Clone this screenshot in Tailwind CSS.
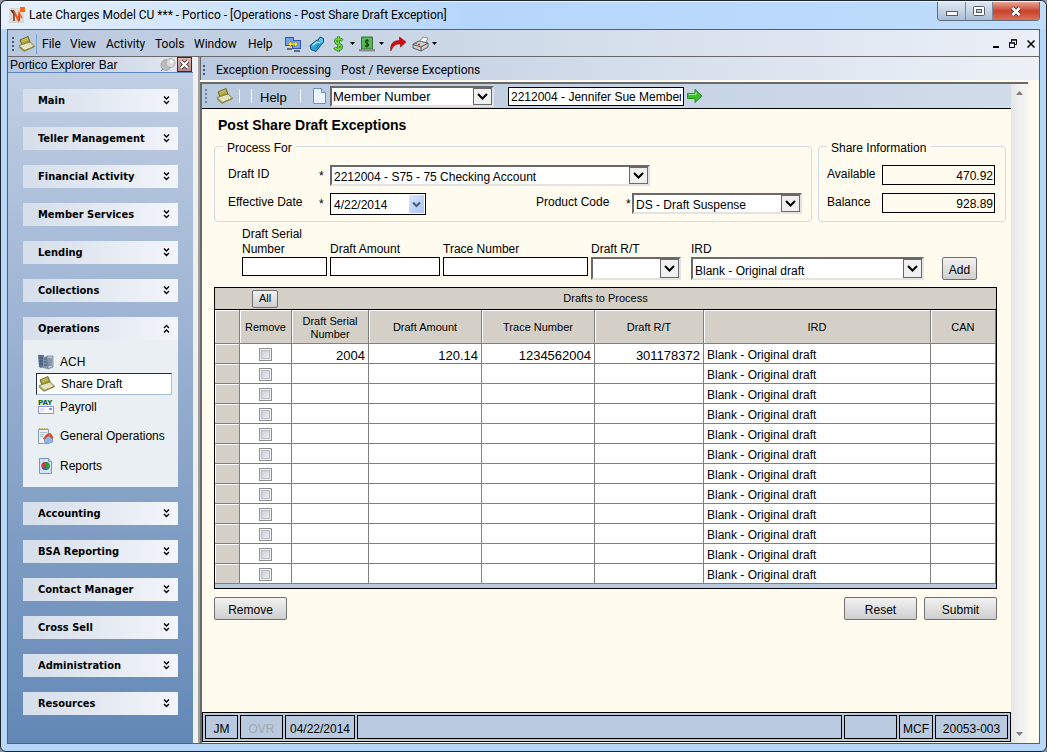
<!DOCTYPE html>
<html lang="en">
<head>
    <meta charset="UTF-8">
    <meta name="viewport" content="width=device-width, initial-scale=1.0">
    <title>Portico - Post Share Draft Exception</title>
    <script src="https://cdn.jsdelivr.net/npm/@tailwindcss/browser@4"></script>
</head>
<body class="bg-[#8d949c] font-['Liberation_Sans',Arial,sans-serif] text-xs text-black">

    <!-- Icons used more than once -->
    <svg class="hidden">
        <symbol id="down" viewBox="0 0 7 9"><path d="M1 .5l2.500 2.500L6 .5M1 5l2.500 2.500L6 5" fill="none" stroke="#000" stroke-width="1.400"/></symbol>
        <symbol id="up" viewBox="0 0 7 9"><path d="M1 4l2.500-2.500L6 4M1 8.500L3.500 6 6 8.500" fill="none" stroke="#000" stroke-width="1.400"/></symbol>
        <symbol id="arrow" viewBox="0 0 11 7"><path d="M1 1l4.500 4.500L10 1" fill="none" stroke="#000" stroke-width="2"/></symbol>
        <symbol id="share" viewBox="0 0 17 16">
            <path d="M2 4l8-3.500 2 5.500-8 3z" fill="#a9a43a" stroke="#6f6b1c"/>
            <path d="M3.500 4.500l6-2.500M4 6l6-2.500" stroke="#c9c566"/>
            <path d="M1 9.500l11-3.500 4.500 4L6 14.500z" fill="#d9d8a8" stroke="#77733a" stroke-width=".8"/>
            <path d="M4 10l7-2.500M5.500 11.500l7-2.500M7 13l7-2.500" stroke="#fff" stroke-dasharray="2 1"/>
            <path d="M1 10v1.500L6 15.800l10.500-4.500V10L6 14.500z" fill="#8a852c"/>
        </symbol>
        <symbol id="caret" viewBox="0 0 5 3"><path d="M0 0h5L2.500 3z"/></symbol>
        <symbol id="grip" viewBox="0 0 2 14"><path d="M0 0h2v2H0zM0 4h2v2H0zM0 8h2v2H0zM0 12h2v2H0z" fill="#44557f"/></symbol>
    </svg>

    <div class="flex h-screen min-h-[752px] flex-col rounded-md border border-[#20262e] bg-[#b7d7f9] px-[6px] pb-[7px]">

        <!-- Title bar -->
        <header class="-mx-[6px] flex h-7 shrink-0 items-start rounded-t-md border-t border-white/70 bg-linear-to-r from-[#e6f0fc] via-[#b5d6fb] via-45% to-[#bfdcfb] pl-2 font-['Roboto','Noto_Sans',sans-serif]">
            <svg class="mt-[5px] h-4 w-4" viewBox="0 0 16 16">
                <rect y="1" width="15" height="15" fill="#dcd8d4"/>
                <path d="M2 3l3 4v7M4 3l6 11V7" fill="none" stroke="#5a3a2a" stroke-width="1.500"/>
                <path d="M5 4l4 9 1-7 3 5" fill="none" stroke="#f0591e" stroke-width="1.600"/>
                <rect x="11" width="5" height="5" fill="#fb6a12"/>
            </svg>
            <h1 class="ml-1 flex-1 pt-[5px] leading-4 whitespace-nowrap">Late Charges Model CU *** - Portico - [Operations - Post Share Draft Exception]</h1>
            <div class="mr-[6px] flex h-[19px] overflow-hidden rounded-b border border-t-0 border-[#5d6d80]">
                <button aria-label="Minimize" class="flex w-[28px] items-center justify-center border-r border-[#7b8b9f] bg-linear-to-b from-[#dbe6f2] via-[#c6d4e4] to-[#a9bdd5]"><svg class="mt-1 h-[5px] w-3"><rect x=".5" y=".5" width="11" height="4" fill="#fff" stroke="#555b6b"/></svg></button>
                <button aria-label="Restore" class="flex w-[27px] items-center justify-center border-r border-[#7b8b9f] bg-linear-to-b from-[#dbe6f2] via-[#c6d4e4] to-[#a9bdd5]"><svg class="h-[10px] w-3"><rect x=".5" y=".5" width="11" height="9" rx="1" fill="#fff" stroke="#555b6b"/><rect x="3.500" y="3.500" width="5" height="3" fill="#b9cade" stroke="#555b6b"/></svg></button>
                <button aria-label="Close" class="flex w-[46px] items-center justify-center bg-linear-to-b from-[#e5a494] via-[#c8412b] to-[#d97155]"><svg class="h-[11px] w-3" viewBox="0 0 12 11"><path d="M2.500 2l7 7m0-7l-7 7" stroke="#5a3c46" stroke-width="4.500"/><path d="M2.500 2l7 7m0-7l-7 7" stroke="#fff" stroke-width="2.600"/></svg></button>
            </div>
        </header>

        <div class="flex min-h-0 flex-1 flex-col border border-[#52606f] bg-[#fffbef]">

            <!-- Menu bar -->
            <nav class="flex h-[27px] shrink-0 items-center border-b border-[#696969] bg-linear-to-r from-[#b8c8df] via-[#cbd7e6] via-40% to-[#ebeff7] pt-px pl-1 font-['Roboto','Noto_Sans',sans-serif]">
                <svg class="h-[14px] w-[2px]"><use href="#grip"/></svg>
                <svg class="ml-1 h-4 w-[17px]"><use href="#share"/></svg>
                <span class="ml-px h-5 w-px bg-[#7ba0d8]"></span>
                <a href="#" class="ml-[5px] w-7">File</a>
                <a href="#" class="w-9">View</a>
                <a href="#" class="w-[49px]">Activity</a>
                <a href="#" class="w-[39px]">Tools</a>
                <a href="#" class="w-[54px]">Window</a>
                <a href="#" class="w-[37px]">Help</a>
                <svg class="h-4 w-4" viewBox="0 0 16 16">
                    <path d="M0 1h9v9H0zM7 4h9v9H7z" fill="#3156b8"/><path d="M1 2h7v7H1zM8 5h7v7H8z" fill="#6fa0ec"/>
                    <path d="M2 12h5v2H2zM9 14h6v2H9z" fill="#6c6c78"/><path d="M3 8l3-3v2h4V5l3 3-3 3V9H6v2z" fill="#ffe81a" stroke="#8f7700" stroke-width=".5"/>
                </svg>
                <svg class="ml-2 h-4 w-4" viewBox="0 0 16 16">
                    <path d="M1 9.500L8 4l6 2.500-7 9-5-2z" fill="#2aa6d8" stroke="#0c4f7c"/><path d="M9 4l2-3 3.500 1.500V6L13 8" fill="#5cc4ea" stroke="#0c4f7c"/>
                    <path d="M3.500 9.500l4.500-3.500 3 1" fill="none" stroke="#b8eefc" stroke-width="1.300"/><path d="M7 12.500l3-4" stroke="#0c4f7c"/>
                </svg>
                <svg class="ml-2 h-4 w-[11px]" viewBox="0 0 11 16"><path d="M9.500 4.500C7 2 2 2.500 2.500 5.500S9 8 8.500 11 3 14 1.500 11.500M5.500.5v15" fill="none" stroke="#1b5c1b" stroke-width="3"/><path d="M9.500 4.500C7 2 2 2.500 2.500 5.500S9 8 8.500 11 3 14 1.500 11.500M5.500.5v15" fill="none" stroke="#6fd63a" stroke-width="1.800"/></svg>
                <svg class="ml-[6px] h-[3px] w-[5px]"><use href="#caret"/></svg>
                <svg class="ml-1 h-4 w-4" viewBox="0 0 16 16">
                    <path d="M2.500 1h11v12h-11z" fill="#58b957" stroke="#3e6d3e"/><path d="M0 13h16v2.500H0z" fill="#8c8c8c"/>
                    <path d="M10 5C8 4 6 4.500 6.300 6S9.700 7.500 9.700 9 7 10.500 6 9.500M8 3v8.500" fill="none" stroke="#123f12" stroke-width="1.100"/>
                </svg>
                <svg class="ml-1 h-[3px] w-[5px]"><use href="#caret"/></svg>
                <svg class="ml-[6px] h-4 w-4" viewBox="0 0 16 16"><path d="M.8 15C0 8 3 4.500 9.500 4.500V1L16 6l-5.500 5V8C5.500 7.500 3 10 .8 15z" fill="#d60a0a" stroke="#8e0707" stroke-width=".6"/></svg>
                <svg class="ml-[6px] h-4 w-[17px]" viewBox="0 0 17 16">
                    <path d="M7 6l4-5 5 1-3 6z" fill="#fff" stroke="#666" stroke-width=".7"/><path d="M1 8l6-3 9 2v4l-7 4-8-3z" fill="#cfcfcf" stroke="#444" stroke-width=".8"/>
                    <path d="M1 8.500l8 2.500 7-4M9 11v4" fill="none" stroke="#555"/><path d="M3 7.500h2" stroke="#1fb31f" stroke-width="1.500"/><path d="M6 8.500h2" stroke="#d22" stroke-width="1.500"/>
                </svg>
                <svg class="ml-[3px] h-[3px] w-[5px]"><use href="#caret"/></svg>
                <button aria-label="Minimize document" class="ml-auto"><svg class="mt-[7px] h-[2px] w-[6px]"><path d="M0 0h6v2H0z"/></svg></button>
                <button aria-label="Restore document" class="ml-[10px]"><svg class="h-[9px] w-2" viewBox="0 0 8 9"><path d="M2.500 3V1h5v4.500H6M2 .8h6M.5 4h5v4.500h-5zM0 3.800h6" fill="none" stroke="#000"/></svg></button>
                <button aria-label="Close document" class="mr-1 ml-[10px]"><svg class="h-2 w-2" viewBox="0 0 8 8"><path d="M.5.5l7 7m0-7l-7 7" stroke="#000" stroke-width="1.500"/></svg></button>
            </nav>

            <div class="flex min-h-0 flex-1">

                <!-- Explorer bar -->
                <aside class="flex w-[185px] shrink-0 flex-col bg-linear-to-b from-[#c3d0e4] to-[#6388b6]">
                    <div class="flex h-4 items-center border-b border-[#5d87be] bg-linear-to-r from-[#b5c4dc] to-[#e4eaf2] pl-[2px]">
                        <h2 class="flex-1">Portico Explorer Bar</h2>
                        <svg class="h-[14px] w-4" viewBox="0 0 16 14"><path d="M1 13l5-5" stroke="#777"/><ellipse cx="6" cy="7" rx="5" ry="5.500" fill="#bcbcbc" stroke="#8b8b8b" stroke-width=".6"/><ellipse cx="10.500" cy="5" rx="4.500" ry="4.500" fill="#dadada" stroke="#939393" stroke-width=".6"/><circle cx="11.500" cy="3.500" r="1.500" fill="#fff"/></svg>
                        <button aria-label="Close explorer bar" class="mr-px ml-px flex h-[15px] w-[15px] items-center justify-center border border-[#5c1a1a] bg-linear-to-b from-[#e9b5ae] to-[#b88580]"><svg class="h-[11px] w-[11px]" viewBox="0 0 11 11"><path d="M2 2l7 7m0-7L2 9" stroke="#444" stroke-width="4"/><path d="M2 2l7 7m0-7L2 9" stroke="#fff" stroke-width="2.200"/></svg></button>
                    </div>
                    <div class="flex flex-col gap-[15px] px-[15px] pt-4 font-['DejaVu_Sans_Condensed','DejaVu_Sans',sans-serif] text-[11px] font-bold">
                        <button class="flex h-[23px] items-center justify-between bg-linear-to-r from-[#d5deea] to-[#f3f5fa] pt-[2px] pr-2 pl-[15px]">Main<svg class="mb-[3px] h-[9px] w-[7px]"><use href="#down"/></svg></button>
                        <button class="flex h-[23px] items-center justify-between bg-linear-to-r from-[#d5deea] to-[#f3f5fa] pt-[2px] pr-2 pl-[15px]">Teller Management<svg class="mb-[3px] h-[9px] w-[7px]"><use href="#down"/></svg></button>
                        <button class="flex h-[23px] items-center justify-between bg-linear-to-r from-[#d5deea] to-[#f3f5fa] pt-[2px] pr-2 pl-[15px]">Financial Activity<svg class="mb-[3px] h-[9px] w-[7px]"><use href="#down"/></svg></button>
                        <button class="flex h-[23px] items-center justify-between bg-linear-to-r from-[#d5deea] to-[#f3f5fa] pt-[2px] pr-2 pl-[15px]">Member Services<svg class="mb-[3px] h-[9px] w-[7px]"><use href="#down"/></svg></button>
                        <button class="flex h-[23px] items-center justify-between bg-linear-to-r from-[#d5deea] to-[#f3f5fa] pt-[2px] pr-2 pl-[15px]">Lending<svg class="mb-[3px] h-[9px] w-[7px]"><use href="#down"/></svg></button>
                        <button class="flex h-[23px] items-center justify-between bg-linear-to-r from-[#d5deea] to-[#f3f5fa] pt-[2px] pr-2 pl-[15px]">Collections<svg class="mb-[3px] h-[9px] w-[7px]"><use href="#down"/></svg></button>
                        <div>
                            <button class="flex h-[23px] w-full items-center justify-between bg-linear-to-r from-[#d5deea] to-[#f3f5fa] pt-[2px] pr-2 pl-[15px]">Operations<svg class="mb-[3px] h-[9px] w-[7px]"><use href="#up"/></svg></button>
                            <div class="flex h-[147px] flex-col bg-[#eaeff3] pt-[10px] pl-[13px] font-['Liberation_Sans',Arial,sans-serif] text-xs font-normal">
                                <a href="#" class="flex h-[23px] items-center gap-[6px] pl-[2px]">
                                    <svg class="h-4 w-4" viewBox="0 0 16 16"><path d="M0 1h6v12l-3 1-2-1z" fill="#5d7390"/><path d="M5 3l5-1v13l-5-1z" fill="#7d93ae"/><path d="M9 2h6v11l-5 2z" fill="#b9c8d8" stroke="#51637c" stroke-width=".6"/><path d="M1 4h4M1 7h4M1 10h4M6 5h3M6 8h3M6 11h3M10 5h4M10 7h4M10 9h4M10 11h4" stroke="#3d4f68" stroke-width=".8"/></svg>ACH
                                </a>
                                <a href="#" class="mr-[6px] flex h-[22px] items-center gap-[6px] border border-[#a9bfe0] border-t-[#222b44] border-l-[#222b44] bg-white pl-px">
                                    <svg class="h-4 w-[17px]"><use href="#share"/></svg>Share Draft
                                </a>
                                <a href="#" class="flex h-6 items-center gap-[6px] pl-[2px]">
                                    <svg class="h-4 w-4" viewBox="0 0 16 16"><text y="6" font-size="7" font-weight="700" font-family="DejaVu Sans, sans-serif" fill="#0b5e1b">PAY</text><path d="M.5 7.500h15v7H.5z" fill="#fff" stroke="#8d8df0"/><path d="M2 10h5M2 12h4" stroke="#c4c4f8"/><path d="M11 9h3v2h-3z" fill="#8d8df0"/></svg>Payroll
                                </a>
                                <a href="#" class="mt-[2px] flex h-[30px] items-center gap-[6px] pl-[2px]">
                                    <svg class="h-4 w-4" viewBox="0 0 16 16"><path d="M.5 1.500h10v14H.5z" fill="#e9f1fa" stroke="#7e9cc0"/><path d="M1 1h10" stroke="#c8902f" stroke-width="1.500" stroke-dasharray="1.500 1"/><path d="M2 4.500h7M2 6.500h4M2 8.500h3" stroke="#a9bfd8"/><path d="M6.500 9.500L10 7.500l4.500 3V14L10 15.500 6.500 14z" fill="#8fb6e4" stroke="#5f7fae" stroke-width=".6"/><path d="M4.800 10.500L9 5.800l3.500-.8 3 4.500-1.500 1.500-3-3.500-4.500 4z" fill="#e04a22"/></svg>General Operations
                                </a>
                                <a href="#" class="flex h-[30px] items-center gap-[6px] pl-[2px]">
                                    <svg class="h-4 w-4" viewBox="0 0 16 16"><path d="M1.500.5h9l3 3v12h-12z" fill="#d5e3f6" stroke="#7795c4"/><path d="M10.500.5v3h3" fill="#fff" stroke="#7795c4"/><circle cx="7.500" cy="8" r="4" fill="#2d5fd0"/><path d="M7.500 8V4a4 4 0 0 0-4 4l1 2.600z" fill="#d83838"/><path d="M7.500 8l-3 2.600A4 4 0 0 0 9 11.800z" fill="#3c62d8"/><path d="M7.500 8V4a4 4 0 0 1 1.500 7.800z" fill="#26a32c"/></svg>Reports
                                </a>
                            </div>
                        </div>
                        <button class="flex h-[23px] items-center justify-between bg-linear-to-r from-[#d5deea] to-[#f3f5fa] pt-[2px] pr-2 pl-[15px]">Accounting<svg class="mb-[3px] h-[9px] w-[7px]"><use href="#down"/></svg></button>
                        <button class="flex h-[23px] items-center justify-between bg-linear-to-r from-[#d5deea] to-[#f3f5fa] pt-[2px] pr-2 pl-[15px]">BSA Reporting<svg class="mb-[3px] h-[9px] w-[7px]"><use href="#down"/></svg></button>
                        <button class="flex h-[23px] items-center justify-between bg-linear-to-r from-[#d5deea] to-[#f3f5fa] pt-[2px] pr-2 pl-[15px]">Contact Manager<svg class="mb-[3px] h-[9px] w-[7px]"><use href="#down"/></svg></button>
                        <button class="flex h-[23px] items-center justify-between bg-linear-to-r from-[#d5deea] to-[#f3f5fa] pt-[2px] pr-2 pl-[15px]">Cross Sell<svg class="mb-[3px] h-[9px] w-[7px]"><use href="#down"/></svg></button>
                        <button class="flex h-[23px] items-center justify-between bg-linear-to-r from-[#d5deea] to-[#f3f5fa] pt-[2px] pr-2 pl-[15px]">Administration<svg class="mb-[3px] h-[9px] w-[7px]"><use href="#down"/></svg></button>
                        <button class="flex h-[23px] items-center justify-between bg-linear-to-r from-[#d5deea] to-[#f3f5fa] pt-[2px] pr-2 pl-[15px]">Resources<svg class="mb-[3px] h-[9px] w-[7px]"><use href="#down"/></svg></button>
                    </div>
                </aside>
                <div class="w-[5px] shrink-0 bg-[#f0f0f0]"></div>

                <div class="flex min-w-0 flex-1 flex-col border-l-2 border-[#a0a0a0]">
                    <!-- Screen menu -->
                    <nav class="flex h-[23px] shrink-0 items-center border-l border-[#696969] bg-linear-to-r from-[#bac9df] to-[#edf1f7] pt-[2px] pl-[2px] font-['Roboto','Noto_Sans',sans-serif]">
                        <svg class="h-[10px] w-[2px]" viewBox="0 0 2 10"><path d="M0 0h2v2H0zM0 4h2v2H0zM0 8h2v2H0z" fill="#44557f"/></svg>
                        <a href="#" class="ml-[11px] w-[125px]">Exception Processing</a>
                        <a href="#">Post / Reverse Exceptions</a>
                    </nav>

                    <div class="mt-[2px] mr-[11px] flex min-h-0 flex-1 border-t-2 border-l-2 border-[#696969]">
                        <main class="flex min-w-0 flex-1 flex-col">
                            <!-- Toolbar -->
                            <div class="flex h-[25px] shrink-0 items-center border-b border-black bg-linear-to-r from-[#b9c9de] to-[#d1dcea] pl-[3px]">
                                <svg class="h-[14px] w-[2px] opacity-60"><use href="#grip"/></svg>
                                <svg class="ml-[9px] h-4 w-[17px]"><use href="#share"/></svg>
                                <span class="ml-[6px] h-[14px] w-px bg-[#eef3f8]"></span>
                                <span class="ml-[11px] h-[14px] w-px bg-[#eef3f8]"></span>
                                <a href="#" class="ml-2 w-10 pt-[3px] text-[13px]">Help</a>
                                <span class="h-[14px] w-px bg-[#eef3f8]"></span>
                                <svg class="ml-3 h-4 w-[13px]" viewBox="0 0 13 16"><path d="M.5.5h8l4 4v11H.5z" fill="#e9f2ff" stroke="#6e8fc4"/><path d="M8.500.5v4h4" fill="#b8cff0" stroke="#6e8fc4"/></svg>
                                <div class="relative ml-1 h-[21px] w-[164px] border-2 border-[#e3e3e3] border-t-[#696969] border-l-[#696969] bg-white">
                                    <select aria-label="Search by" class="h-full w-full appearance-none pl-px text-[13px]"><option>Member Number</option></select>
                                    <span class="pointer-events-none absolute inset-y-0 right-0 flex w-[19px] items-center justify-center border border-[#696969] bg-[#f0f0f0]"><svg class="h-[7px] w-[11px]"><use href="#arrow"/></svg></span>
                                </div>
                                <input type="text" aria-label="Member" value="2212004 - Jennifer Sue Member" class="ml-[14px] h-[19px] w-[176px] border border-black bg-white px-[2px] pt-px">
                                <button aria-label="Go" class="ml-[3px]"><svg class="h-[14px] w-4" viewBox="0 0 16 14"><path d="M.5 4.500H8v-4L15 7l-7 6.500v-4H.5z" fill="#3fbf2c" stroke="#1f8f15"/><path d="M1.500 5.500H9V3" fill="none" stroke="#a2ec93"/></svg></button>
                            </div>

                            <h2 class="h-[29px] pt-1 pl-4 text-sm leading-6 font-bold">Post Share Draft Exceptions</h2>

                            <div class="flex gap-[6px] pr-[5px] pl-3">
                                <fieldset class="min-w-0 flex-1 rounded border border-[#d0dbe6] pr-[9px] pb-[6px] pl-[13px]">
                                    <legend class="-ml-[5px] h-4 px-1 leading-5">Process For</legend>
                                    <div class="mt-[11px] flex items-start">
                                        <label for="draftId" class="w-[91px] leading-[18px]">Draft ID</label>
                                        <span class="w-[11px] pt-[3px]">*</span>
                                        <div class="relative h-[21px] w-[320px] border-2 border-[#e3e3e3] border-t-[#696969] border-l-[#696969] bg-white">
                                            <select id="draftId" class="h-full w-full appearance-none pt-[2px] pl-[2px]"><option>2212004 - S75 - 75 Checking Account</option></select>
                                            <span class="pointer-events-none absolute inset-y-0 right-0 flex w-[19px] items-center justify-center border border-[#696969] bg-[#f0f0f0]"><svg class="h-[7px] w-[11px]"><use href="#arrow"/></svg></span>
                                        </div>
                                    </div>
                                    <div class="mt-[7px] flex items-start">
                                        <label for="effectiveDate" class="w-[91px] leading-[18px]">Effective Date</label>
                                        <span class="w-[11px] pt-[3px]">*</span>
                                        <div class="relative h-[22px] w-24 border border-black bg-white">
                                            <input type="text" id="effectiveDate" value="4/22/2014" class="h-full w-full pt-[2px] pl-[3px]">
                                            <button aria-label="Open calendar" class="absolute inset-y-px right-px flex w-[15px] items-center justify-center bg-linear-to-br from-[#dbe6fd] to-[#a9c3f5]"><svg class="h-[7px] w-[9px]" viewBox="0 0 9 7"><path d="M1 1.500L4.500 5 8 1.500" fill="none" stroke="#4a6080" stroke-width="2.200"/></svg></button>
                                        </div>
                                        <label for="productCode" class="ml-auto w-[90px] leading-[18px]">Product Code</label>
                                        <span class="w-[6px] pt-[3px]">*</span>
                                        <div class="relative h-[21px] w-[170px] border-2 border-[#e3e3e3] border-t-[#696969] border-l-[#696969] bg-white">
                                            <select id="productCode" class="h-full w-full appearance-none pt-[2px] pl-[2px]"><option>DS - Draft Suspense</option></select>
                                            <span class="pointer-events-none absolute inset-y-0 right-0 flex w-[19px] items-center justify-center border border-[#696969] bg-[#f0f0f0]"><svg class="h-[7px] w-[11px]"><use href="#arrow"/></svg></span>
                                        </div>
                                    </div>
                                </fieldset>
                                <fieldset class="w-[188px] min-w-0 shrink-0 rounded border border-[#d0dbe6] pr-[10px] pl-2">
                                    <legend class="h-4 px-1 leading-5">Share Information</legend>
                                    <div class="mt-[11px] flex items-start">
                                        <label for="available" class="w-[55px] shrink-0 leading-[18px]">Available</label>
                                        <input type="text" id="available" value="470.92" readonly class="h-5 min-w-0 flex-1 border border-black px-px pt-px text-right">
                                    </div>
                                    <div class="mt-2 flex items-start">
                                        <label for="balance" class="w-[55px] shrink-0 leading-[18px]">Balance</label>
                                        <input type="text" id="balance" value="928.89" readonly class="h-5 min-w-0 flex-1 border border-black px-px pt-px text-right">
                                    </div>
                                </fieldset>
                            </div>

                            <!-- Entry line -->
                            <form class="mt-[5px] flex items-start pl-10">
                                <div class="mr-[3px] w-[85px]">
                                    <label for="serial" class="flex h-[30px] items-end leading-[15px]">Draft Serial Number</label>
                                    <input type="text" id="serial" class="block h-[19px] w-full border border-black bg-white">
                                </div>
                                <div class="mr-[3px] w-[110px]">
                                    <label for="amount" class="flex h-[30px] items-end leading-[15px]">Draft Amount</label>
                                    <input type="text" id="amount" class="block h-[19px] w-full border border-black bg-white">
                                </div>
                                <div class="mr-[3px] w-[145px]">
                                    <label for="trace" class="flex h-[30px] items-end leading-[15px]">Trace Number</label>
                                    <input type="text" id="trace" class="block h-[19px] w-full border border-black bg-white">
                                </div>
                                <div class="mr-[10px] w-[90px]">
                                    <label for="draftRt" class="flex h-[30px] items-end leading-[15px]">Draft R/T</label>
                                    <div class="relative h-[23px] border-2 border-[#e3e3e3] border-t-[#696969] border-l-[#696969] bg-white">
                                        <select id="draftRt" class="h-full w-full appearance-none pl-[2px]"><option></option></select>
                                        <span class="pointer-events-none absolute inset-y-0 right-0 flex w-[19px] items-center justify-center border border-[#696969] bg-[#f0f0f0]"><svg class="h-[7px] w-[11px]"><use href="#arrow"/></svg></span>
                                    </div>
                                </div>
                                <div class="mr-[18px] w-[233px]">
                                    <label for="ird" class="flex h-[30px] items-end leading-[15px]">IRD</label>
                                    <div class="relative h-[23px] border-2 border-[#e3e3e3] border-t-[#696969] border-l-[#696969] bg-white">
                                        <select id="ird" class="h-full w-full appearance-none pt-1 pl-[2px]"><option>Blank - Original draft</option></select>
                                        <span class="pointer-events-none absolute inset-y-0 right-0 flex w-[19px] items-center justify-center border border-[#696969] bg-[#f0f0f0]"><svg class="h-[7px] w-[11px]"><use href="#arrow"/></svg></span>
                                    </div>
                                </div>
                                <button type="button" class="mt-[30px] h-[23px] w-[35px] rounded-xs border border-[#707070] bg-linear-to-b from-[#f2f2f2] to-[#cfcfcf] pt-[2px]">Add</button>
                            </form>

                            <!-- Drafts -->
                            <div class="mt-[7px] mr-[14px] ml-3 border border-black bg-[#b9c9de] pb-1">
                                <table class="w-full table-fixed border-separate border-spacing-0">
                                    <colgroup>
                                        <col class="w-[25px]"><col class="w-[52px]"><col class="w-[77px]"><col class="w-[113px]"><col class="w-[113px]"><col class="w-[109px]"><col><col class="w-[65px]">
                                    </colgroup>
                                    <thead class="bg-[#d4d0c8] text-[11px]">
                                        <tr>
                                            <th colspan="8" class="h-[22px] border-b border-black p-0 font-normal">
                                                <div class="flex items-center">
                                                    <button class="ml-[37px] h-[18px] w-[26px] rounded-xs border border-[#707070] bg-linear-to-b from-[#f2f2f2] to-[#cfcfcf]">All</button>
                                                    <span class="mr-[63px] flex-1">Drafts to Process</span>
                                                </div>
                                            </th>
                                        </tr>
                                        <tr class="h-[34px] leading-[13px] *:border-r *:border-b *:border-[#808080] *:p-0 *:pt-[2px] *:font-normal *:shadow-[inset_1px_1px_#fff]">
                                            <th></th>
                                            <th>Remove</th>
                                            <th>Draft Serial<br>Number</th>
                                            <th>Draft Amount</th>
                                            <th>Trace Number</th>
                                            <th>Draft R/T</th>
                                            <th>IRD</th>
                                            <th>CAN</th>
                                        </tr>
                                    </thead>
                                    <tbody id="draftRows" class="bg-white"></tbody>
                                </table>
                            </div>

                            <div class="mt-2 mr-[14px] ml-3 flex gap-[7px] *:h-[23px] *:w-[73px] *:rounded-xs *:border *:border-[#707070] *:bg-linear-to-b *:from-[#f2f2f2] *:to-[#cfcfcf] *:pt-[2px]">
                                <button class="mr-auto">Remove</button>
                                <button>Reset</button>
                                <button>Submit</button>
                            </div>

                            <!-- Status bar -->
                            <footer class="mt-auto mb-px flex h-[30px] shrink-0 gap-[2px] border border-black bg-[#b9c9de] p-[2px] *:flex *:items-center *:justify-center *:border *:border-black *:pt-[3px]">
                                <div class="w-[33px]">JM</div>
                                <div class="w-[43px] text-[#a3a8ae]">OVR</div>
                                <div class="w-[70px]">04/22/2014</div>
                                <div class="flex-1"></div>
                                <div class="w-[53px]"></div>
                                <div class="w-[34px]">MCF</div>
                                <div class="w-[73px]">20053-003</div>
                            </footer>
                        </main>

                        <!-- Scrollbar -->
                        <div class="flex w-[17px] flex-col items-center justify-between bg-linear-to-r from-[#e6e6e8] via-[#f0f0f0] to-[#f4f4f6] py-[7px]">
                            <svg class="h-1 w-[7px]" viewBox="0 0 7 4"><path d="M0 4h7L3.500 0z" fill="#7d7d7d"/></svg>
                            <svg class="h-1 w-[7px]" viewBox="0 0 7 4"><path d="M0 0h7L3.500 4z" fill="#7d7d7d"/></svg>
                        </div>
                    </div>
                </div>
            </div>
        </div>
    </div>

    <script>
        const drafts = [{ serial: '2004', amount: '120.14', trace: '1234562004', rt: '301178372' }];
        const cell = 'border-r border-b border-[#808080] p-0 pt-1 pr-[3px] text-right text-[13px] leading-[15px]';

        for (let i = 0; i < 12; i++) {
            const d = drafts[i] || { serial: '', amount: '', trace: '', rt: '' };
            document.getElementById('draftRows').innerHTML += `
                <tr class="h-5">
                    <td class="border-r border-b border-[#808080] bg-[#d4d0c8] p-0 shadow-[inset_1px_1px_#fff]"></td>
                    <td class="border-r border-b border-[#808080] p-0"><input type="checkbox" aria-label="Remove row ${i + 1}" class="mx-auto mt-px block h-[13px] w-[13px] appearance-none border border-[#8e8f8f] bg-linear-to-br from-[#c4c9d2] to-[#f4f4f6] shadow-[inset_0_0_0_1px_#f4f4f4,inset_0_0_0_2px_#b5bac4]"></td>
                    <td class="${cell}">${d.serial}</td>
                    <td class="${cell}">${d.amount}</td>
                    <td class="${cell}">${d.trace}</td>
                    <td class="${cell}">${d.rt}</td>
                    <td class="border-r border-b border-[#808080] p-0 pt-1 pl-[3px] leading-[15px]">Blank - Original draft</td>
                    <td class="border-r border-b border-[#808080] p-0"></td>
                </tr>`;
        }
    </script>
</body>
</html>
